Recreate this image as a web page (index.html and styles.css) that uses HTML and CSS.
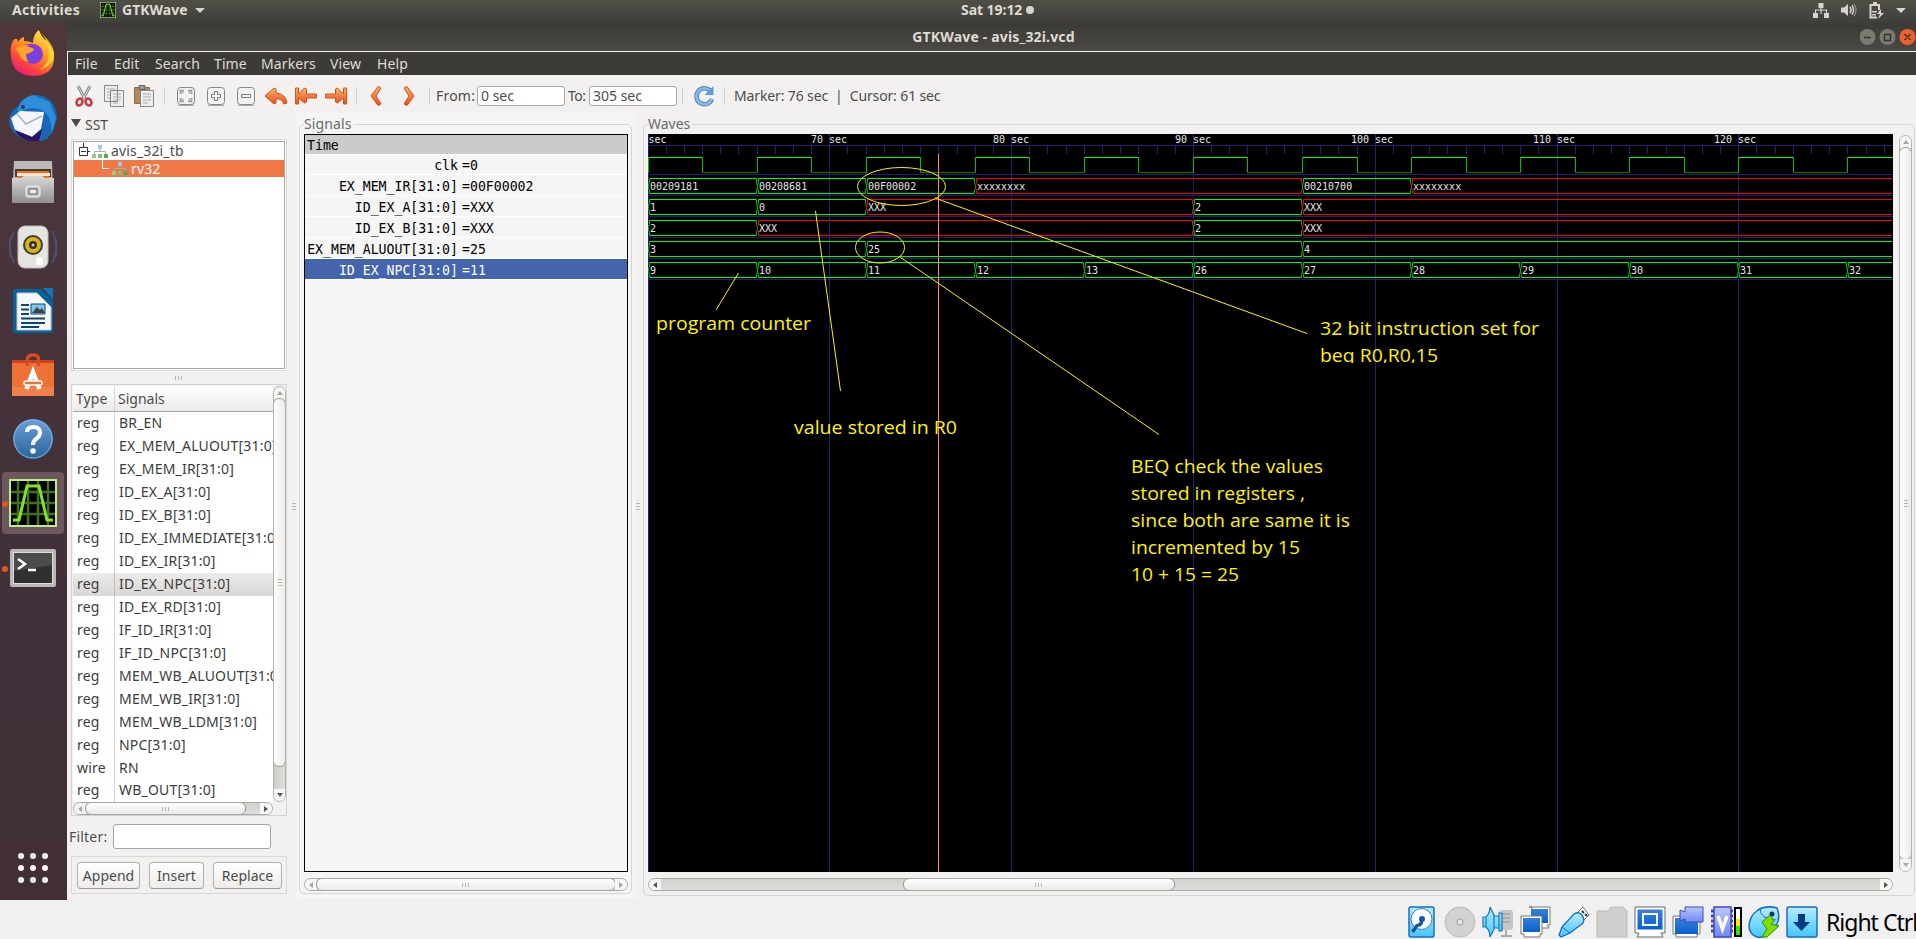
FILE: index.html
```html
<!DOCTYPE html>
<html lang="en">
<head>
<meta charset="utf-8">
<title>GTKWave - avis_32i.vcd</title>
<link rel="stylesheet" href="styles.css">
</head>
<body>
<svg width="0" height="0" class="defs">
  <defs>
    <linearGradient id="gOrange" x1="0" y1="0" x2="0" y2="1"><stop offset="0" stop-color="#f7b26b"/><stop offset="1" stop-color="#e8501c"/></linearGradient>
    <linearGradient id="gFox" x1=".8" y1="0" x2=".2" y2="1"><stop offset="0" stop-color="#fff04a"/><stop offset=".4" stop-color="#ff9a1f"/><stop offset=".75" stop-color="#ff4040"/><stop offset="1" stop-color="#e31587"/></linearGradient>
    <linearGradient id="gGrey" x1="0" y1="0" x2="0" y2="1"><stop offset="0" stop-color="#d8d8d6"/><stop offset="1" stop-color="#8f8f8d"/></linearGradient>
    <linearGradient id="gBlue" x1="0" y1="0" x2="0" y2="1"><stop offset="0" stop-color="#6ba0dc"/><stop offset="1" stop-color="#286498"/></linearGradient>
    <linearGradient id="gSky" x1="0" y1="0" x2="0" y2="1"><stop offset="0" stop-color="#b4ecff"/><stop offset="1" stop-color="#45c6fa"/></linearGradient>
    <linearGradient id="gScreen" x1="0" y1="0" x2="0" y2="1"><stop offset="0" stop-color="#3a7fdd"/><stop offset="1" stop-color="#0560d0"/></linearGradient>
    <linearGradient id="gViolet" x1="0" y1="0" x2="0" y2="1"><stop offset="0" stop-color="#b9c6ff"/><stop offset="1" stop-color="#6f88f5"/></linearGradient>
    <symbol id="hier" viewBox="0 0 16 13">
      <path d="M8 4v3M2.500 9V6.500h11V9" fill="none" stroke="#aaa"/>
      <path d="M6 0h4v4H6z" fill="#a3c8f0"/><path d="M0 9h4v4H0z" fill="#8fcf8a"/><path d="M6 9h4v4H6z" fill="#7cc477"/><path d="M12 9h4v4h-4z" fill="#4eae50"/>
    </symbol>
    <symbol id="wave" viewBox="0 0 48 48">
      <path d="M0 0h48v48H0z" fill="#b9ee8a"/><path d="M2 2h44v44H2z" fill="#000"/>
      <path d="M9 2v44M19 2v44M29 2v44M39 2v44M2 13h44M2 24h44M2 35h44" stroke="#41701e" stroke-width="2.500"/>
      <path d="M4 41h6L18 7h12l8 34h6" fill="none" stroke="#84e12c" stroke-width="3"/>
    </symbol>
  </defs>
</svg>

<header class="topbar">
  <div class="top-left"><b class="activities">Activities</b><svg width="16" height="16"><use href="#wave"/></svg><b class="appname">GTKWave</b><i class="caret"></i></div>
  <div class="clock"><b>Sat 19:12</b><i class="dot"></i></div>
  <div class="tray">
    <svg width="16" height="16" viewBox="0 0 16 16"><path d="M8 4v8M2.500 12V8h11v4" fill="none" stroke="#d6d4cd" stroke-width="1.200"/><path d="M5.500 1h5v5h-5zM0 11h5v5H0zM11 11h5v5h-5z" fill="#d6d4cd"/></svg>
    <svg width="16" height="16" viewBox="0 0 16 16"><path d="M0 5.500h3L7 2v12L3 10.500H0z" fill="#d6d4cd"/><path d="M9 5q2 3 0 6M11 3.500q3 4.500 0 9" fill="none" stroke="#d6d4cd" stroke-width="1.500"/><path d="M13 2q4 6 0 12" fill="none" stroke="#85837b" stroke-width="1.500"/></svg>
    <svg width="15" height="17" viewBox="0 0 15 17"><path d="M10 8V3H1.500v12.500H8M4 1h4" fill="none" stroke="#d6d4cd" stroke-width="2"/><path d="M3 9h5v1.500H3zM3 12h4v1.500H3zM12 7l-4 5h3l-2 5 6-6h-3z" fill="#d6d4cd"/></svg>
    <i class="caret"></i>
  </div>
</header>

<main class="desktop">
  <nav class="launcher">
    <div class="app"><svg width="48" height="48" viewBox="0 0 48 48"><path d="M3 13Q5 8 8 9l1 3q2-4 6-5v4q5 0 9 2 0-9 6-13 2 7 8 11l2 4q6 6 5 15Q43 46 24 46 3 45 2 26 1 18 3 13z" fill="url(#gFox)"/><circle cx="24" cy="24" r="10" fill="#7b3fe0"/><path d="M15 15q11-4 18 5l-9-5z" fill="#b132d8"/><path d="M6 19q9-6 19 0 0 3-8 5 0 5 3 8-9-2-10-9z" fill="#ffa628"/><path d="M31 2q12 11 8 28-3 7-9 10 16-5 15-18-2-10-14-20z" fill="#ffdf3c" opacity=".8"/></svg></div>
    <div class="app"><svg width="48" height="48" viewBox="0 0 48 48"><path d="M9 14Q14 0 30 1q17 4 18 23l-3 11-7 10-6 2Q2 47 0 27q1-11 9-15z" fill="#1767b4"/><path d="M8 17q3-13 16-16l17 7 6 16-5 17q2-20-10-25-8-5-20 2z" fill="#2d8fdc"/><path d="M2 24l9-7 24 1-3 17-9 8L6 36z" fill="#f5f6fa"/><path d="M8 20l9 10 16-8" fill="none" stroke="#aab3c4" stroke-width="1.500"/><path d="M6 36l17 7 10-8-3 12Q12 48 6 36z" fill="#2a1168"/><circle cx="14" cy="13" r="2" fill="#123b78"/></svg></div>
    <div class="app"><svg width="48" height="48" viewBox="0 0 48 48"><path d="M5 3h38l1 40H3z" fill="#b9b9b7"/><path d="M6 11h36v8H6z" fill="#463a35"/><path d="M8 13h32v7H8z" fill="#e86c21"/><path d="M8 15h33v3H8z" fill="#ffe3c8"/><path d="M3 20h9l3-2h18l3 2h9v25H3z" fill="url(#gGrey)"/><rect x="17" y="28" width="14" height="11" rx="2" fill="#c9c9c7" stroke="#f2f2f2"/><path d="M20 31h8v5h-8z" fill="#eee" stroke="#555"/></svg></div>
    <div class="app"><svg width="48" height="48" viewBox="0 0 48 48"><path d="M5 8q-8 16 0 32M43 8q8 16 0 32M2 14q-4 10 0 20M46 14q4 10 0 20" fill="none" stroke="#4b5475" stroke-width="1.500"/><rect x="9" y="3" width="30" height="42" rx="7" fill="#e4e4e1" stroke="#bdbdb9"/><circle cx="24" cy="22" r="10" fill="#3b3b39"/><circle cx="24" cy="22" r="8" fill="#d7b514"/><circle cx="24" cy="22" r="4" fill="#333"/><circle cx="24" cy="22" r="1.500" fill="#ccc"/><rect x="27" y="34" width="7" height="8" rx="3" fill="#fff"/></svg></div>
    <div class="app"><svg width="48" height="48" viewBox="0 0 48 48"><path d="M4 2h28l12 12v30q0 2-2 2H6q-2 0-2-2z" fill="#03639b"/><path d="M34 1h10v12z" fill="#0a7ab8"/><path d="M8 6h20l14 14v23H8z" fill="#f7f7f7" stroke="#c4c4c4"/><path d="M12 18h8M12 22.500h8M12 27h8M12 31.500h24M12 36h24M12 40h18" stroke="#0a4873" stroke-width="2"/><path d="M22 17h14v10H22z" fill="#7cc8ed" stroke="#0a4873"/><path d="M23 26l5-6 3 3 2-2 3 5z" fill="#3c4240"/></svg></div>
    <div class="app"><svg width="48" height="48" viewBox="0 0 48 48"><path d="M3 9h42v7H3z" fill="#c8441c"/><path d="M3 12h42v33H3z" fill="#ee7236"/><path d="M3 36h42v9H3z" fill="#f0814a"/><path d="M18.500 15V8q0-4 5.500-4t5.500 4v7" fill="none" stroke="#d84b20" stroke-width="3.500"/><path d="M17.500 38l6.500-17 6.500 17" fill="none" stroke="#fff" stroke-width="4.500"/><rect x="15" y="30" width="18" height="4" rx="2" fill="#ee7236" stroke="#fff" stroke-width="1.500"/></svg></div>
    <div class="app"><svg width="48" height="48" viewBox="0 0 48 48"><circle cx="24" cy="24" r="20" fill="url(#gBlue)"/><circle cx="24" cy="24" r="19" fill="none" stroke="#85b2e2"/><path d="M18 17q0-5 6.500-5t6.500 5.500q0 4-4 6.500-3 2-3 6" fill="none" stroke="#fff" stroke-width="4"/><circle cx="24" cy="36" r="2.800" fill="#fff"/></svg></div>
    <div class="app active"><i class="run"></i><svg width="48" height="48"><use href="#wave"/></svg></div>
    <div class="app"><i class="run"></i><svg width="48" height="48" viewBox="0 0 48 48"><rect x="1" y="5" width="46" height="38" rx="2" fill="#b8b8b6"/><path d="M4 8h40v32H4z" fill="#dededc"/><path d="M5 9h38v30H5z" fill="#30302f"/><path d="M5 9h38v12L5 27z" fill="#4b4b49"/><path d="M9 15l7 5-7 5M19 26h8" fill="none" stroke="#fff" stroke-width="2.500"/></svg></div>
    <div class="allapps"><i></i><i></i><i></i><i></i><i></i><i></i><i></i><i></i><i></i></div>
  </nav>

  <section class="window">
    <div class="titlebar"><b>GTKWave - avis_32i.vcd</b>
      <svg class="winbtns" width="56" height="20" viewBox="0 0 56 20"><circle cx="7.500" cy="10" r="8" fill="#7b7a72"/><circle cx="27.500" cy="10" r="8" fill="#7b7a72"/><circle cx="47.500" cy="10" r="8" fill="#f0602f"/><path d="M4 10.500h7M24.500 7.500h6v6h-6zM44.500 7l6 6M50.500 7l-6 6" fill="none" stroke="#35342f" stroke-width="1.400"/></svg>
    </div>
    <div class="menubar"><span class="m1">File</span><span class="m2">Edit</span><span class="m3">Search</span><span class="m4">Time</span><span class="m5">Markers</span><span class="m6">View</span><span>Help</span></div>

    <div class="toolbar">
      <svg class="tb" viewBox="0 0 24 24"><path d="M6 2l7 13M18 2l-7 13" stroke="#888" stroke-width="3"/><path d="M6 2l7 13M18 2l-7 13" stroke="#ddd" stroke-width="1"/><g fill="none" stroke="#c33b46" stroke-width="2.600"><ellipse cx="7.500" cy="18" rx="2.800" ry="3.600" transform="rotate(25 7.500 18)"/><ellipse cx="16.500" cy="18" rx="2.800" ry="3.600" transform="rotate(-25 16.500 18)"/></g></svg>
      <svg class="tb" viewBox="0 0 24 24"><path d="M2.500 1.500h13v16h-13zM8.500 6.500h13v16h-13z" fill="#eee" stroke="#888"/><path d="M5 5h8M5 8h3M5 11h3M5 14h3M11 10h8M11 13h8M11 16h8M11 19h5" stroke="#aaa"/></svg>
      <svg class="tb" viewBox="0 0 24 24"><path d="M2.500 3.500h15v16h-15z" fill="#b3895a" stroke="#8d6a40"/><path d="M7 1.500h6v4H7z" fill="#999" stroke="#666"/><path d="M8.500 6.500h13v16h-13z" fill="#eee" stroke="#888"/><path d="M11 10h8M11 13h8M11 16h8M11 19h5" stroke="#aaa"/></svg>
      <i class="sep"></i>
      <svg class="tb" viewBox="0 0 24 24"><rect x="3.500" y="3.500" width="17" height="17" rx="3" fill="#f2f2f0" stroke="#858583"/><path d="M4 21.500h16" stroke="#aaa"/><path d="M7 10V7h3M14 7h3v3M17 14v3h-3M10 17H7v-3" fill="none" stroke="#777" stroke-width="2.500"/><path d="M7 10V7h3M14 7h3v3M17 14v3h-3M10 17H7v-3" fill="none" stroke="#fff" stroke-width=".8"/></svg>
      <svg class="tb" viewBox="0 0 24 24"><rect x="3.500" y="3.500" width="17" height="17" rx="3" fill="#f2f2f0" stroke="#858583"/><path d="M4 21.500h16" stroke="#aaa"/><path d="M10.500 7.500h3v3h3v3h-3v3h-3v-3h-3v-3h3z" fill="#fff" stroke="#777"/></svg>
      <svg class="tb" viewBox="0 0 24 24"><rect x="3.500" y="3.500" width="17" height="17" rx="3" fill="#f2f2f0" stroke="#858583"/><path d="M4 21.500h16" stroke="#aaa"/><path d="M7.500 10.500h9v3h-9z" fill="#fff" stroke="#777"/></svg>
      <svg class="tb" viewBox="0 0 24 24"><path d="M1 12l9-8 2 1v4q10 1 11 10l-3 1q-3-6-8-5v4l-2 1z" fill="url(#gOrange)" stroke="#d4511d"/></svg>
      <svg class="tb" viewBox="0 0 24 24"><path d="M1.500 4h3v6l6-6 2 1v5h10v4h-10v4l-2 1-6-5v6h-3z" fill="url(#gOrange)" stroke="#d4511d"/></svg>
      <svg class="tb" viewBox="0 0 24 24"><path d="M22.500 4h-3v6l-6-6-2 1v5h-10v4h10v4l2 1 6-5v6h3z" fill="url(#gOrange)" stroke="#d4511d"/></svg>
      <i class="sep s2"></i>
      <svg class="tb" viewBox="0 0 24 24"><path d="M14 2.500l3 1.500-5 8 5 8-3 1.500-7-9.500z" fill="url(#gOrange)" stroke="#d4511d"/></svg>
      <svg class="tb nx" viewBox="0 0 24 24"><path d="M10 2.500L7 4l5 8-5 8 3 1.500 7-9.500z" fill="url(#gOrange)" stroke="#d4511d"/></svg>
      <i class="sep s3"></i>
      <label class="from">From:</label><span class="entry">0 sec</span><label class="to">To:</label><span class="entry">305 sec</span>
      <i class="sep s4"></i>
      <svg class="tb rf" viewBox="0 0 24 24"><path d="M18 6.500A8 8 0 1 0 20 15" fill="none" stroke="#4a86c6" stroke-width="4.500"/><path d="M18 6.500A8 8 0 1 0 20 15" fill="none" stroke="#8db9e6" stroke-width="2.500"/><path d="M21.500 2v9h-9z" fill="#5f99d6"/></svg>
      <i class="sep s5"></i>
      <span class="status">Marker: 76 sec&nbsp; |&nbsp; Cursor: 61 sec</span>
    </div>

    <div class="panes">
      <aside class="sst">
        <div class="sst-head"><i class="tri"></i>SST</div>
        <div class="tree">
          <div class="trow"><svg class="expander" width="12" height="17" viewBox="0 0 12 17"><path d="M5.500 0v4M1.500 4.500h8v8h-8zM3 8.500h5M10 8.500h2" fill="none" stroke="#333"/></svg><svg width="16" height="13"><use href="#hier"/></svg><span class="tname">avis_32i_tb</span></div>
          <div class="trow sel"><svg class="elbow" width="8" height="17" viewBox="0 0 8 17"><path d="M.5 0v8.500H7" fill="none" stroke="#fff"/></svg><svg width="16" height="13"><use href="#hier"/></svg><span class="tname">rv32</span></div>
        </div>
        <div class="grip h"></div>
        <div class="list">
          <div class="list-main">
            <div class="lhead"><span>Type</span><span>Signals</span></div>
            <div class="lrow"><span>reg</span><span>BR_EN</span></div>
            <div class="lrow"><span>reg</span><span>EX_MEM_ALUOUT[31:0]</span></div>
            <div class="lrow"><span>reg</span><span>EX_MEM_IR[31:0]</span></div>
            <div class="lrow"><span>reg</span><span>ID_EX_A[31:0]</span></div>
            <div class="lrow"><span>reg</span><span>ID_EX_B[31:0]</span></div>
            <div class="lrow"><span>reg</span><span>ID_EX_IMMEDIATE[31:0]</span></div>
            <div class="lrow"><span>reg</span><span>ID_EX_IR[31:0]</span></div>
            <div class="lrow on"><span>reg</span><span>ID_EX_NPC[31:0]</span></div>
            <div class="lrow"><span>reg</span><span>ID_EX_RD[31:0]</span></div>
            <div class="lrow"><span>reg</span><span>IF_ID_IR[31:0]</span></div>
            <div class="lrow"><span>reg</span><span>IF_ID_NPC[31:0]</span></div>
            <div class="lrow"><span>reg</span><span>MEM_WB_ALUOUT[31:0]</span></div>
            <div class="lrow"><span>reg</span><span>MEM_WB_IR[31:0]</span></div>
            <div class="lrow"><span>reg</span><span>MEM_WB_LDM[31:0]</span></div>
            <div class="lrow"><span>reg</span><span>NPC[31:0]</span></div>
            <div class="lrow"><span>wire</span><span>RN</span></div>
            <div class="lrow"><span>reg</span><span>WB_OUT[31:0]</span></div>
          </div>
          <div class="vs"><i class="up dim"></i><b class="vthumb t1"><i class="grip v"></i></b><u></u><i class="down"></i></div>
          <div class="hs"><i class="lf dim"></i><b class="hthumb t2"><i class="grip h"></i></b><u></u><i class="rt"></i></div>
        </div>
        <div class="filter"><label>Filter:</label><span class="entry"></span></div>
        <div class="buttons"><span class="btn b1">Append</span><span class="btn b2">Insert</span><span class="btn b3">Replace</span></div>
      </aside>
      <div class="gutter"><i class="grip v"></i></div>

      <section class="signals">
        <div class="legend">Signals</div>
        <div class="sigbox">
          <div class="srow time">Time</div>
          <div class="srow"><span>clk</span><span>=0</span></div>
          <div class="srow"><span>EX_MEM_IR[31:0]</span><span>=00F00002</span></div>
          <div class="srow"><span>ID_EX_A[31:0]</span><span>=XXX</span></div>
          <div class="srow"><span>ID_EX_B[31:0]</span><span>=XXX</span></div>
          <div class="srow"><span>EX_MEM_ALUOUT[31:0]</span><span>=25</span></div>
          <div class="srow cur"><span>ID_EX_NPC[31:0]</span><span>=11</span></div>
        </div>
        <div class="hs"><i class="lf dim"></i><b class="hthumb full"><i class="grip h"></i></b><i class="rt dim"></i></div>
      </section>
      <div class="gutter g2"><i class="grip v"></i></div>

      <section class="waves">
        <div class="legend">Waves</div>
        <div class="wbody">
          <svg id="plot" width="1245" height="738" viewBox="648 134 1245 738"></svg>
          <div class="vs"><i class="up dim"></i><b class="vthumb full"><i class="grip v"></i></b><i class="down dim"></i></div>
        </div>
        <div class="hs"><i class="lf"></i><u class="w1"></u><b class="hthumb t3"><i class="grip h"></i></b><u></u><i class="rt"></i></div>
      </section>
    </div>
  </section>
</main>

<footer class="vmbar">
  <svg width="32" height="32" viewBox="0 0 32 32"><rect x="3" y="1" width="25" height="30" rx="2" fill="url(#gSky)" stroke="#1a6cc0" stroke-width="1.500"/><circle cx="15.500" cy="13" r="10.500" fill="#fff" stroke="#2d83cf"/><circle cx="16" cy="13" r="3" fill="#1159a8"/><path d="M17 14q1 6-5 7l-4 6-3-2 5-7q4 0 5-5z" fill="#0f55a5"/></svg>
  <svg width="32" height="32" viewBox="0 0 32 32"><circle cx="16" cy="16" r="15" fill="#d2d2d2" stroke="#b9b9b9"/><circle cx="16" cy="16" r="3" fill="#e8e8e8" stroke="#b0b0b0" stroke-width="1.500"/></svg>
  <svg width="32" height="32" viewBox="0 0 32 32"><rect x="17" y="4" width="14" height="20" rx="3" fill="#c6c6c6"/><path d="M19 8h9M19 12h9M19 16h9M24 24v5M19 30h11" stroke="#ababab" stroke-width="2"/><path d="M1 11h3v10H1zM4 11q4-4 4-10l4 8v14L8 31q0-6-4-10zM12 10h5v12h-5zM17 7h3v18h-3z" fill="url(#gSky)" stroke="#1677bd" stroke-width="1.200"/></svg>
  <svg width="32" height="32" viewBox="0 0 32 32"><path d="M9 1h21v18h-3l2 3H12V1z" fill="#fff" stroke="#777"/><path d="M11 3h17v14H11z" fill="url(#gScreen)"/><path d="M1 10h21v18h-2v3H4v-3H1z" fill="#fff" stroke="#777"/><path d="M3 12h17v14H3z" fill="url(#gScreen)"/></svg>
  <svg width="32" height="32" viewBox="0 0 32 32"><path d="M18 8l7-7 6 8-7 7z" fill="#fff" stroke="#777"/><path d="M24 5l2 2M27 8l2 2" stroke="#333" stroke-width="2"/><path d="M4 21L16 8q5-3 8 1t1 8L12 27l-9 4-2-2z" fill="url(#gSky)" stroke="#1a6cc0" stroke-width="1.300"/><path d="M4 21l8 6" stroke="#1a6cc0"/></svg>
  <svg width="32" height="32" viewBox="0 0 32 32"><path d="M1 31V5h11l3-4h12l4 4v26z" fill="#cfcfcf" stroke="#bcbcbc"/></svg>
  <svg width="32" height="32" viewBox="0 0 32 32"><path d="M1 1h30v26h-4l2 4H3l2-4H1z" fill="#fff" stroke="#666"/><path d="M3.500 3.500h25v20h-25z" fill="url(#gScreen)"/><path d="M9 8h14v11H9z" fill="none" stroke="#fff" stroke-width="2"/></svg>
  <svg width="32" height="32" viewBox="0 0 32 32"><path d="M1 10h27v18h-3v3H4v-3H1z" fill="#fff" stroke="#777"/><path d="M3 12h23v16H3z" fill="url(#gScreen)"/><path d="M13 1h18v15H13v-3l-5 2V4l5 2z" fill="url(#gViolet)" stroke="#4048b4"/></svg>
  <svg width="34" height="32" viewBox="0 0 34 32"><path d="M4 1h17v30H4z" fill="url(#gViolet)" stroke="#4048b4" stroke-width="1.500"/><path d="M1 5h3M1 10h3M1 15h3M1 20h3M1 25h3M21 5h2M21 10h2M21 15h2M21 20h2M21 25h2" stroke="#4048b4" stroke-width="3"/><path d="M8 10l4.500 13L17 10" fill="none" stroke="#fff" stroke-width="3.500"/><path d="M24 1h8v30h-8z" fill="#000"/><path d="M26 3h4v10h-4z" fill="#fff"/><path d="M26 13h4v7h-4z" fill="#ffe600"/><path d="M26 20h4v9h-4z" fill="#38e000"/></svg>
  <svg width="32" height="32" viewBox="0 0 32 32"><path d="M1 21Q1 10 10 4 18-1 29 2q4 9-1 18-8 13-19 11Q2 29 1 21z" fill="url(#gSky)" stroke="#1a6cc0" stroke-width="1.500"/><path d="M12 3q0 10 16 11" fill="none" stroke="#1a6cc0"/><circle cx="24" cy="8" r="2.500" fill="#0b3470"/><path d="M14 16l8-7 4 6-3 3 8 2-12 11h-5l5-8z" fill="#7ee000" stroke="#318a00"/></svg>
  <svg width="32" height="32" viewBox="0 0 32 32"><rect x="1" y="1" width="30" height="30" rx="2" fill="url(#gSky)" stroke="#1a6cc0" stroke-width="1.500"/><path d="M12 8h7v8h5l-8.500 9L7 16h5z" fill="#003a82"/></svg>
  <span>Right Ctrl</span>
</footer>
<script src="waves.js"></script>
</body>
</html>
```

FILE: styles.css
```css
* { box-sizing: border-box; }
html, body { margin: 0; height: 100%; overflow: hidden; }
body { width: 1916px; height: 939px; display: flex; flex-direction: column; background: #f0f0f0; color: #4c4c4c; font: 14px/20px "Noto Sans", "Open Sans", sans-serif; }
svg { display: block; flex: none; }
i, u { display: block; font-style: normal; text-decoration: none; }
.defs { position: absolute; }

.topbar { height: 23px; flex: none; display: grid; grid-template-columns: 961px auto 1fr; align-items: center; background: linear-gradient(#504f47, #3f3e39); color: #dfdbd2; font-size: 14px; padding-bottom: 4px; }
.top-left, .clock, .tray { display: flex; align-items: center; }
.activities { margin-left: 12px; width: 88px; letter-spacing: .3px; }
.appname { margin-left: 6px; width: 73px; letter-spacing: 0; }
.caret { width: 9px; border: 5px solid transparent; border-top-color: #d6d4cd; border-bottom: 0; }
.clock { letter-spacing: -.05px; }
.dot { width: 8px; height: 8px; border-radius: 50%; background: #d6d4cd; margin-left: 4px; }
.tray { justify-content: flex-end; gap: 12px; padding-right: 10px; }

.desktop { height: 877px; flex: none; display: flex; }
.launcher { width: 67px; background: linear-gradient(#4e373b, #40303a 70%, #412f34); display: flex; flex-direction: column; align-items: center; flex: none; padding-right: 1px; }
.app { width: 62px; height: 62px; margin: 0 0 2.200px 0; border-radius: 4px; display: flex; align-items: center; justify-content: center; position: relative; }
.active { background: #6b575c; }
.run { position: absolute; left: 0; top: 29px; width: 6px; height: 6px; border-radius: 50%; background: #e95420; }
.allapps { margin-top: auto; margin-bottom: 17px; display: grid; grid-template-columns: repeat(3, 6px); gap: 6px; }
.allapps i { height: 6px; border-radius: 50%; background: #f2f2f2; }

.window { flex: 1; min-width: 0; background: #f2f1f0; display: flex; flex-direction: column; }
.titlebar { height: 29px; flex: none; background: linear-gradient(#3b3a36, #4a4943); border-bottom: 1px solid #f2f1f0; display: grid; grid-template-columns: 1fr auto 1fr; align-items: center; color: #dfdbd2; font-size: 14px; letter-spacing: .17px; padding-bottom: 1px; }
.titlebar b { grid-column: 2; margin-left: 4px; }
.winbtns { justify-self: end; margin-right: 0; }
.menubar { height: 23px; flex: none; margin-left: 1px; padding-left: 7px; background: #3c3b37; color: #dfdbd2; display: flex; align-items: center; }
.menubar span { margin-right: 14px; letter-spacing: .1px; }
.menubar .m1 { width: 25px; } .m2 { width: 27px; } .m3 { width: 45px; } .m4 { width: 33px; } .m5 { width: 55px; } .m6 { width: 33px; }

.toolbar { height: 38px; flex: none; padding: 4px 0 0 2px; display: flex; align-items: center; }
.tb { width: 24px; height: 24px; margin: 0 3px; }
.sep { width: 12px; height: 18px; flex: none; background: linear-gradient(#d0cfcd, #d0cfcd) 5px 0 / 1px 100% no-repeat; }
.s2 { width: 10px; }
.nx { margin-left: 6px; }
.s3 { width: 8px; }
.from { width: 41px; margin-left: 4px; letter-spacing: .2px; white-space: nowrap; }
.to { width: 21px; letter-spacing: -.5px; margin-left: 3px; text-align: left; }
.entry { display: block; width: 88px; height: 20px; line-height: 18px; border: 1px solid #a9a5a0; border-radius: 3px; background: #fff; padding-left: 3px; letter-spacing: 0; white-space: nowrap; }
.s4 { width: 12px; }
.rf { margin: 0 3px; }
.s5 { width: 8px; }
.status { margin-left: 7px; letter-spacing: -.13px; white-space: nowrap; }

.panes { flex: 1; display: flex; min-height: 0; }
.sst { width: 221px; flex: none; padding-left: 4px; }
.sst-head { height: 26px; display: flex; align-items: center; padding-bottom: 3px; }
.tri { border: 5px solid transparent; border-top: 8px solid #4c4c4c; border-bottom: 0; margin: -4px 4px 0 0; }
.tree { height: 232px; border: 1px solid #dcdbd9; outline: 1px solid #aaa7a3; outline-offset: -3px; background: #fff; padding: 2px; width: 216px; }
.trow { height: 18px; display: flex; align-items: center; padding-left: 4px; letter-spacing: .15px; }
.trow.sel { background: #f07746; color: #fff; height: 17px; padding-left: 28px; }
.expander { margin-right: 2px; }
.elbow { margin-right: 2px; }
.tname { margin-left: 3px; }
.grip.h { width: 8px; height: 4px; background: repeating-linear-gradient(90deg, #b5b3b0 0 1px, transparent 1px 3px); }
.grip.v { width: 4px; height: 8px; background: repeating-linear-gradient(#b5b3b0 0 1px, transparent 1px 3px); }
.sst > .grip { margin: 5px auto 4px 104px; }
.list { width: 216px; height: 432px; border: 1px solid #d5d3d1; padding: 1px; display: grid; grid-template: 416px 14px / 200px 13px; overflow: hidden; }
.list-main { background: linear-gradient(90deg, transparent 41px, #d5d5d5 41px 42px, transparent 42px) #fff; overflow: hidden; color: #3c3c3c; }
.lhead { height: 26px; background: linear-gradient(90deg, transparent 41px, #d5d5d5 41px 42px, transparent 42px), linear-gradient(#fff, #ebeae8); border-bottom: 1px solid #a9a6a3; display: flex; align-items: center; color: #4c4c4c; padding-left: 3px; }
.lhead span:first-child { width: 42px; letter-spacing: .1px; }
.lrow { height: 22.950px; display: flex; align-items: center; padding-left: 4px; white-space: nowrap; letter-spacing: .2px; }
.lrow span:first-child { width: 42px; flex: none; letter-spacing: .2px; }
.on { background: linear-gradient(90deg, transparent 41px, #c0bebb 41px 42px, transparent 42px), linear-gradient(#ebebea, #d9d7d5); }

.vs { width: 13px; display: flex; flex-direction: column; background: linear-gradient(90deg, #cfcdcb, #dedddb); border: 1px solid #b5b2af; border-radius: 7px; overflow: hidden; }
.hs { height: 13px; display: flex; background: linear-gradient(#d3d1ce, #dedddb); border: 1px solid #aaa7a3; border-radius: 7px; overflow: hidden; }
.vs > i, .hs > i { flex: none; background: #f6f6f5; display: flex; align-items: center; justify-content: center; }
.vs > i { height: 12px; } .hs > i { width: 12px; }
.vs > i::after, .hs > i::after { content: ""; border: 3px solid transparent; }
.up::after { border-bottom: 4px solid #555 !important; border-top: 0 !important; }
.down::after { border-top: 4px solid #555 !important; border-bottom: 0 !important; }
.lf::after { border-right: 4px solid #555 !important; border-left: 0 !important; }
.rt::after { border-left: 4px solid #555 !important; border-right: 0 !important; }
.dim::after { opacity: .5; }
.vthumb, .hthumb { display: flex; align-items: center; justify-content: center; border-radius: 6px; border: 1px solid #9b9895; flex: none; margin: -1px; }
.vthumb { background: linear-gradient(90deg, #fff, #eceae8); }
.hthumb { background: linear-gradient(#fff, #eceae8); }
.full { flex: 1; }
.vs u, .hs u { flex: 1; }
.t1 { height: 369px; } .t2 { width: 161px; } .t3 { width: 272px; }
.hs .w1 { flex: none; width: 243px; }

.filter { display: flex; align-items: center; height: 25px; margin: 8px 0 7px -2px; }
.filter label { width: 44px; white-space: nowrap; letter-spacing: .2px; }
.filter .entry { width: 158px; height: 25px; }
.buttons { width: 216px; height: 38px; border: 1px solid #dad9d7; display: flex; align-items: center; padding: 1px 0 0 5px; }
.btn { height: 27px; line-height: 25px; border: 1px solid #b3afab; border-bottom-color: #999; border-radius: 4px; background: linear-gradient(#fff, #edecea); text-align: center; }
.b1 { width: 63px; margin-right: 9px; } .b2 { width: 55px; margin-right: 9px; } .b3 { width: 69px; }

.gutter { width: 9px; display: flex; flex: none; justify-content: center; padding-top: 390px; }
.gutter .grip { margin-left: 2px; }
.g2 { width: 8px; }
.g2 .grip { margin-left: -2px; }
.signals { width: 338px; flex: none; background: #f5f5f5; height: 785px; padding: 0 7px; border-left: 3px solid #f5f5f5; }
.signals, .waves { position: relative; }
.signals::before, .waves::before { content: ""; position: absolute; left: -1px; top: 11px; right: 3px; bottom: 4px; border: 1px solid #d5d4d2; border-radius: 5px; }
.legend { position: relative; width: max-content; height: 21px; line-height: 21px; color: #6a6a6a; white-space: nowrap; padding-right: 2px; }
.signals .legend { background: #f5f5f5; margin-left: -3px; letter-spacing: .1px; }
.waves .legend { background: #f2f1f0; }
.sigbox { position: relative; width: 324px; margin-left: -3px; height: 738px; border: 1px solid #000; background: #f5f5f5; color: #000; font: 13.200px/19px "DejaVu Sans Mono", monospace; }
.srow { height: 21px; line-height: 21px; display: flex; border-bottom: 1px solid #fff; }
.srow span { position: relative; top: 1px; }
.srow span:first-child { width: 153px; text-align: right; flex: none; margin-right: 4px; }
.srow.time { height: 20px; background: #cbcbcb; padding-left: 2px; }
.time + .srow { height: 20px; }
.time + .srow span { top: 0; }
.srow.cur { background: #4464ac; color: #fff; }
.signals .hs { position: relative; width: 324px; margin: 6px 0 0 -3px; }
.waves { flex: 1; min-width: 0; height: 785px; padding-left: 5px; }
.waves::before { left: 0; right: 1px; bottom: 2px; }
.wbody { display: flex; position: relative; }
#plot { background: #000; }
.wbody .vs { margin: 1px 0 0 6px; height: 737px; }
.waves .hs { position: relative; width: 1245px; margin-top: 6px; }

#plot text { font-family: "DejaVu Sans Mono", monospace; font-size: 10px; fill: #e6e6e6; }
#plot .note { font-family: "Open Sans", "Noto Sans", sans-serif; font-size: 19px; font-weight: 500; fill: #fff200; }

.vmbar { flex: 1; display: flex; align-items: center; gap: 6px; padding: 5px 0 0 1406px; white-space: nowrap; overflow: hidden; }
.vmbar svg:nth-child(9) { margin-right: -2px; }
.vmbar span { font: 23px/30px "Noto Sans", sans-serif; color: #000; margin-left: 2px; letter-spacing: -1px; }
```

FILE: waves.js
```js
// Draws the timing diagram: time ruler, clock, buses and the notes on top.
const NS = 'http://www.w3.org/2000/svg';
const plot = document.getElementById('plot');
const END = 1892;
const tx = t => Math.floor(648 + (t - 60) * 18.18 + 0.01) + 0.5;

function add(tag, attrs, text) {
  const el = document.createElementNS(NS, tag);
  for (const k in attrs) el.setAttribute(k, attrs[k]);
  if (text) el.textContent = text;
  plot.appendChild(el);
}
const path = (d, stroke) => add('path', { d, stroke, fill: 'none', 'stroke-width': 1 });

// Ruler and grid
path('M648 145.500H1893', '#20207c');
for (let t = 60; t <= 128; t++) {
  path(`M${tx(t)} ${t % 10 ? '145V154' : (t === 60 ? '134V872' : '145V872')}`, '#20207c');
}
for (let y = 174.5; y < 290; y += 21) path(`M648 ${y}H1893`, '#20207c');
add('text', { x: 648.5, y: 143 }, 'sec');
for (let t = 70; t <= 120; t += 10) {
  path(`M${tx(t)} 134V145`, '#20207c');
  add('text', { x: tx(t) - (t < 100 ? 18.5 : 24.5), y: 143 }, `${t} sec`);
}

// Clock
for (let t = 60; t < 128; t += 6) {
  path(`M${tx(t)} 172.500V157.500M${tx(t + 3)} 157.500V172.500`, '#00c000');
  path(`M${tx(t)} 157.500H${tx(t + 3)}`, '#00ff00');
  path(`M${tx(t + 3)} 172.500H${tx(t + 6)}`, '#008000');
}

// Buses: [start time, label, undefined flag]
const counter = [9, 10, 11, 12, 13, 26, 27, 28, 29, 30, 31, 32].map((v, i) => [60 + i * 6, String(v)]);
const buses = [
  [[60, '00209181'], [66, '00208681'], [72, '00F00002'], [78, 'xxxxxxxx', 1], [96, '00210700'], [102, 'xxxxxxxx', 1]],
  [[60, '1'], [66, '0'], [72, 'XXX', 1], [90, '2'], [96, 'XXX', 1]],
  [[60, '2'], [66, 'XXX', 1], [90, '2'], [96, 'XXX', 1]],
  [[60, '3'], [72, '25'], [96, '4']],
  counter
];
buses.forEach((segs, row) => {
  const y = 178.5 + row * 21;
  segs.forEach(([t, label, bad], i) => {
    const next = segs[i + 1];
    const a = tx(t) + 1;
    const b = next ? tx(next[0]) - 1 : END;
    path(`M${a} ${y}H${b}M${a} ${y + 15}H${b}`, bad ? '#ff0000' : '#00ff00');
    const edge = bad ? '#ff0000' : '#00c000';
    path(`M${a} ${y}v4l-1 3v2l1 3v3`, edge);
    if (next) path(`M${b} ${y}v4l1 3v2l-1 3v3`, edge);
    add('text', { x: tx(t) + 1.5, y: y + 11.500 }, label);
  });
});

// Marker
path('M938.500 154V872', '#ff8080');

// Notes
const YEL = '#fff200';
add('ellipse', { cx: 901.5, cy: 186.5, rx: 44, ry: 19, fill: 'none', stroke: YEL });
add('ellipse', { cx: 880, cy: 247.5, rx: 24.5, ry: 15.5, fill: 'none', stroke: YEL });
path('M935 198L1307 333.500M900 257L1159 434.500M815.500 211L840.500 391M738.500 273L716 310', YEL);
[
  ['program counter', 656, 330, 155], ['value stored in R0', 794, 434, 163],
  ['32 bit instruction set for', 1320, 335, 219], ['beq R0,R0,15', 1320, 362, 118],
  ['BEQ check the values', 1131, 473, 192], ['stored in registers ,', 1131, 500, 174],
  ['since both are same it is', 1131, 527, 219], ['incremented by 15', 1131, 554, 169],
  ['10 + 15 = 25', 1131, 581, 108]
].forEach(([s, x, y, w]) => add('text', { x, y, textLength: w, lengthAdjust: 'spacingAndGlyphs', class: 'note' }, s));
add('rect', { x: 1318, y: 363, width: 200, height: 8, fill: '#000' });
path('M1375.500 363V372', '#20207c');
```
